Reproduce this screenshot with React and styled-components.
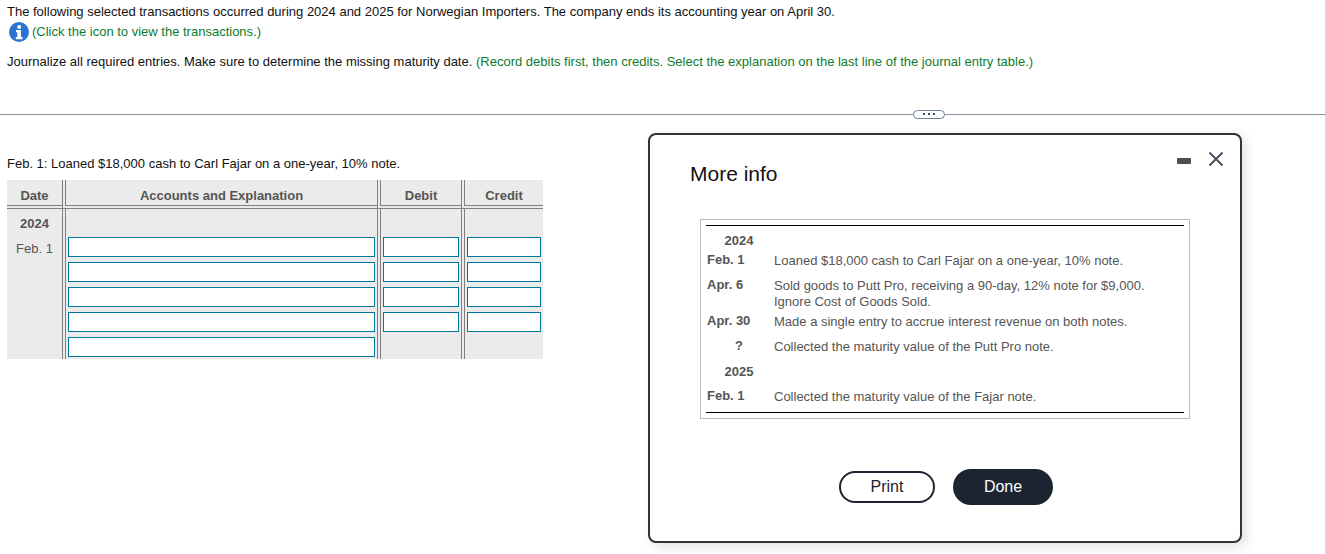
import React from 'react';
import styled, { createGlobalStyle } from 'styled-components';

const GlobalStyle = createGlobalStyle`
  html, body {
    margin: 0;
    padding: 0;
    background: #fff;
  }
  body {
    font-family: "Liberation Sans", Arial, sans-serif;
    font-size: 13px;
    color: #111;
  }
`;

const Page = styled.div`
  position: relative;
  width: 1325px;
  height: 554px;
  overflow: hidden;
`;

const Intro = styled.div`
  padding: 4px 0 0 7px;
  line-height: 16px;
`;

const HintRow = styled.div`
  display: flex;
  align-items: center;
  gap: 3px;
  height: 20px;
  margin: 2px 0 0 2px;
  color: #0f7a2e;
`;

const Instructions = styled.div`
  margin-top: 12px;
`;

const Hint = styled.span`
  color: #0f7a2e;
`;

const DividerRow = styled.div`
  display: flex;
  align-items: center;
  height: 8px;
  margin-top: 40px;
`;

const Rule = styled.div`
  flex: ${(p) => (p.$grow ? 1 : 'none')};
  width: ${(p) => (p.$grow ? 'auto' : '913px')};
  height: 1px;
  background: #8a90a2;
`;

const Ellipsis = styled.button`
  display: flex;
  align-items: center;
  justify-content: center;
  gap: 3px;
  width: 32px;
  height: 9px;
  padding: 0;
  border: 1px solid #6f7f92;
  border-radius: 5px;
  background: #fff;
`;

const Dot = styled.span`
  width: 2px;
  height: 2px;
  background: #3c4654;
`;

const Work = styled.div`
  padding: 38px 0 0 7px;
`;

const Prompt = styled.div`
  line-height: 16px;
  margin-bottom: 8px;
`;

const Journal = styled.div`
  display: grid;
  grid-template-columns: 55px 315px 84px 82px;
  grid-template-rows: 29px 28px repeat(4, 25px) 22px;
  width: 536px;
  background: #ebebeb;
  color: #555;
`;

const Cell = styled.div`
  box-sizing: border-box;
  display: flex;
  align-items: ${(p) => (p.$head ? 'center' : 'flex-start')};
  justify-content: center;
  border-left: ${(p) => (p.$first ? 'none' : '4px double #808080')};
  border-bottom: ${(p) => (p.$head ? '4px double #808080' : 'none')};
  font-weight: ${(p) => (p.$bold ? 'bold' : 'normal')};
  line-height: 16px;
  padding-top: ${(p) => (p.$head ? '6px' : p.$pad ? `${p.$pad}px` : 0)};
`;

const Field = styled.input`
  box-sizing: border-box;
  display: block;
  width: ${(p) => p.$w}px;
  height: 20px;
  padding: 0;
  border: 1px solid #00789b;
  border-radius: 0;
  background: #fff;
  outline: none;
`;

const Modal = styled.div`
  position: absolute;
  left: 648px;
  top: 133px;
  box-sizing: border-box;
  width: 594px;
  height: 410px;
  padding: 26px 50px 0 40px;
  border: 2px solid #333;
  border-radius: 8px;
  background: #fff;
  box-shadow: 4px 4px 12px rgba(0, 0, 0, 0.12);
`;

const ModalTools = styled.div`
  position: absolute;
  top: 17px;
  right: 17px;
  display: flex;
  align-items: center;
  gap: 18px;
`;

const Minimize = styled.span`
  display: block;
  width: 14px;
  height: 6px;
  margin-top: 3px;
  border-radius: 1px;
  background: #4a4f57;
`;

const Title = styled.h2`
  margin: 0;
  font-size: 21px;
  font-weight: normal;
  line-height: 26px;
  color: #111;
`;

const InfoBox = styled.div`
  box-sizing: border-box;
  width: 490px;
  height: 200px;
  margin: 32px 0 0 10px;
  padding: 5px;
  border: 1px solid #bbb;
`;

const InfoInner = styled.div`
  height: 188px;
  padding-top: 3px;
  box-sizing: border-box;
  border-top: 1px solid #000;
  border-bottom: 1px solid #000;
`;

const InfoRow = styled.div`
  display: grid;
  grid-template-columns: 68px 1fr;
  min-height: 25px;
  box-sizing: border-box;
  padding-top: 4px;
  line-height: 16px;
  color: #555;

  &:first-child {
    min-height: 20px;
  }
`;

const InfoDate = styled.div`
  margin-top: ${(p) => (p.$year ? 0 : '-1px')};
  padding: ${(p) => (p.$center ? '0 2px 0 0' : '0 0 0 1px')};
  text-align: ${(p) => (p.$center ? 'center' : 'left')};
  font-weight: bold;
`;

const Actions = styled.div`
  display: flex;
  align-items: center;
  justify-content: center;
  gap: 18px;
  margin: 50px 0 0 12px;
`;

const Pill = styled.button`
  box-sizing: border-box;
  width: ${(p) => (p.$primary ? 100 : 96)}px;
  height: ${(p) => (p.$primary ? 36 : 32)}px;
  padding: 0;
  border: ${(p) => (p.$primary ? 'none' : '2px solid #1d2431')};
  border-radius: 18px;
  background: ${(p) => (p.$primary ? '#1d2431' : '#fff')};
  color: ${(p) => (p.$primary ? '#fff' : '#1d2431')};
  font-family: inherit;
  font-size: 16px;
`;

const InfoIcon = () => (
  <svg width="20" height="20" viewBox="0 0 20 20">
    <circle cx="10" cy="10" r="10" fill="#2a75d3" />
    <circle cx="10.2" cy="5" r="2" fill="#fff" />
    <path d="M7 8h5v7h1.5v2.2H6.800v-2.200H8.300v-4.800H7z" fill="#fff" />
  </svg>
);

const CloseIcon = () => (
  <svg width="14" height="14" viewBox="0 0 14 14">
    <path d="M0.500 0.500L13.500 13.500M13.500 0.500L0.500 13.500" stroke="#47535f" strokeWidth="2" fill="none" />
  </svg>
);

const lineRows = [0, 1, 2, 3, 4];

const transactions = [
  { date: '2024', center: true, year: true },
  { date: 'Feb. 1', text: 'Loaned $18,000 cash to Carl Fajar on a one-year, 10% note.' },
  {
    date: 'Apr. 6',
    text: (
      <>
        Sold goods to Putt Pro, receiving a 90-day, 12% note for $9,000.
        <br />
        Ignore Cost of Goods Sold.
      </>
    ),
  },
  { date: 'Apr. 30', text: 'Made a single entry to accrue interest revenue on both notes.' },
  { date: '?', center: true, text: 'Collected the maturity value of the Putt Pro note.' },
  { date: '2025', center: true, year: true },
  { date: 'Feb. 1', text: 'Collected the maturity value of the Fajar note.' },
];

const App = () => (
  <Page>
    <GlobalStyle />
    <Intro>
      <div>
        The following selected transactions occurred during 2024 and 2025 for Norwegian Importers.
        {' '}The company ends its accounting year on April 30.
      </div>
      <HintRow>
        <InfoIcon />
        (Click the icon to view the transactions.)
      </HintRow>
      <Instructions>
        Journalize all required entries. Make sure to determine the missing maturity date.{' '}
        <Hint>(Record debits first, then credits. Select the explanation on the last line of the journal entry table.)</Hint>
      </Instructions>
    </Intro>

    <DividerRow>
      <Rule />
      <Ellipsis>
        <Dot />
        <Dot />
        <Dot />
      </Ellipsis>
      <Rule $grow />
    </DividerRow>

    <Work>
      <Prompt>Feb. 1: Loaned $18,000 cash to Carl Fajar on a one-year, 10% note.</Prompt>
      <Journal>
        <Cell $head $bold $first>Date</Cell>
        <Cell $head $bold>Accounts and Explanation</Cell>
        <Cell $head $bold>Debit</Cell>
        <Cell $head $bold>Credit</Cell>

        <Cell $first $bold $pad={7}>2024</Cell>
        <Cell />
        <Cell />
        <Cell />

        {lineRows.map((row) => (
          <React.Fragment key={row}>
            <Cell $first $pad={row === 0 ? 4 : 0}>{row === 0 ? 'Feb. 1' : ''}</Cell>
            <Cell><Field $w={307} /></Cell>
            <Cell>{row < 4 && <Field $w={76} />}</Cell>
            <Cell>{row < 4 && <Field $w={74} />}</Cell>
          </React.Fragment>
        ))}
      </Journal>
    </Work>

    <Modal>
      <ModalTools>
        <Minimize />
        <CloseIcon />
      </ModalTools>
      <Title>More info</Title>
      <InfoBox>
        <InfoInner>
          {transactions.map((t) => (
            <InfoRow key={`${t.date}-${t.center}-${typeof t.text === 'string' ? t.text : 'sold'}`}>
              <InfoDate $center={t.center} $year={t.year}>{t.date}</InfoDate>
              <div>{t.text}</div>
            </InfoRow>
          ))}
        </InfoInner>
      </InfoBox>
      <Actions>
        <Pill>Print</Pill>
        <Pill $primary>Done</Pill>
      </Actions>
    </Modal>
  </Page>
);

export default App;
